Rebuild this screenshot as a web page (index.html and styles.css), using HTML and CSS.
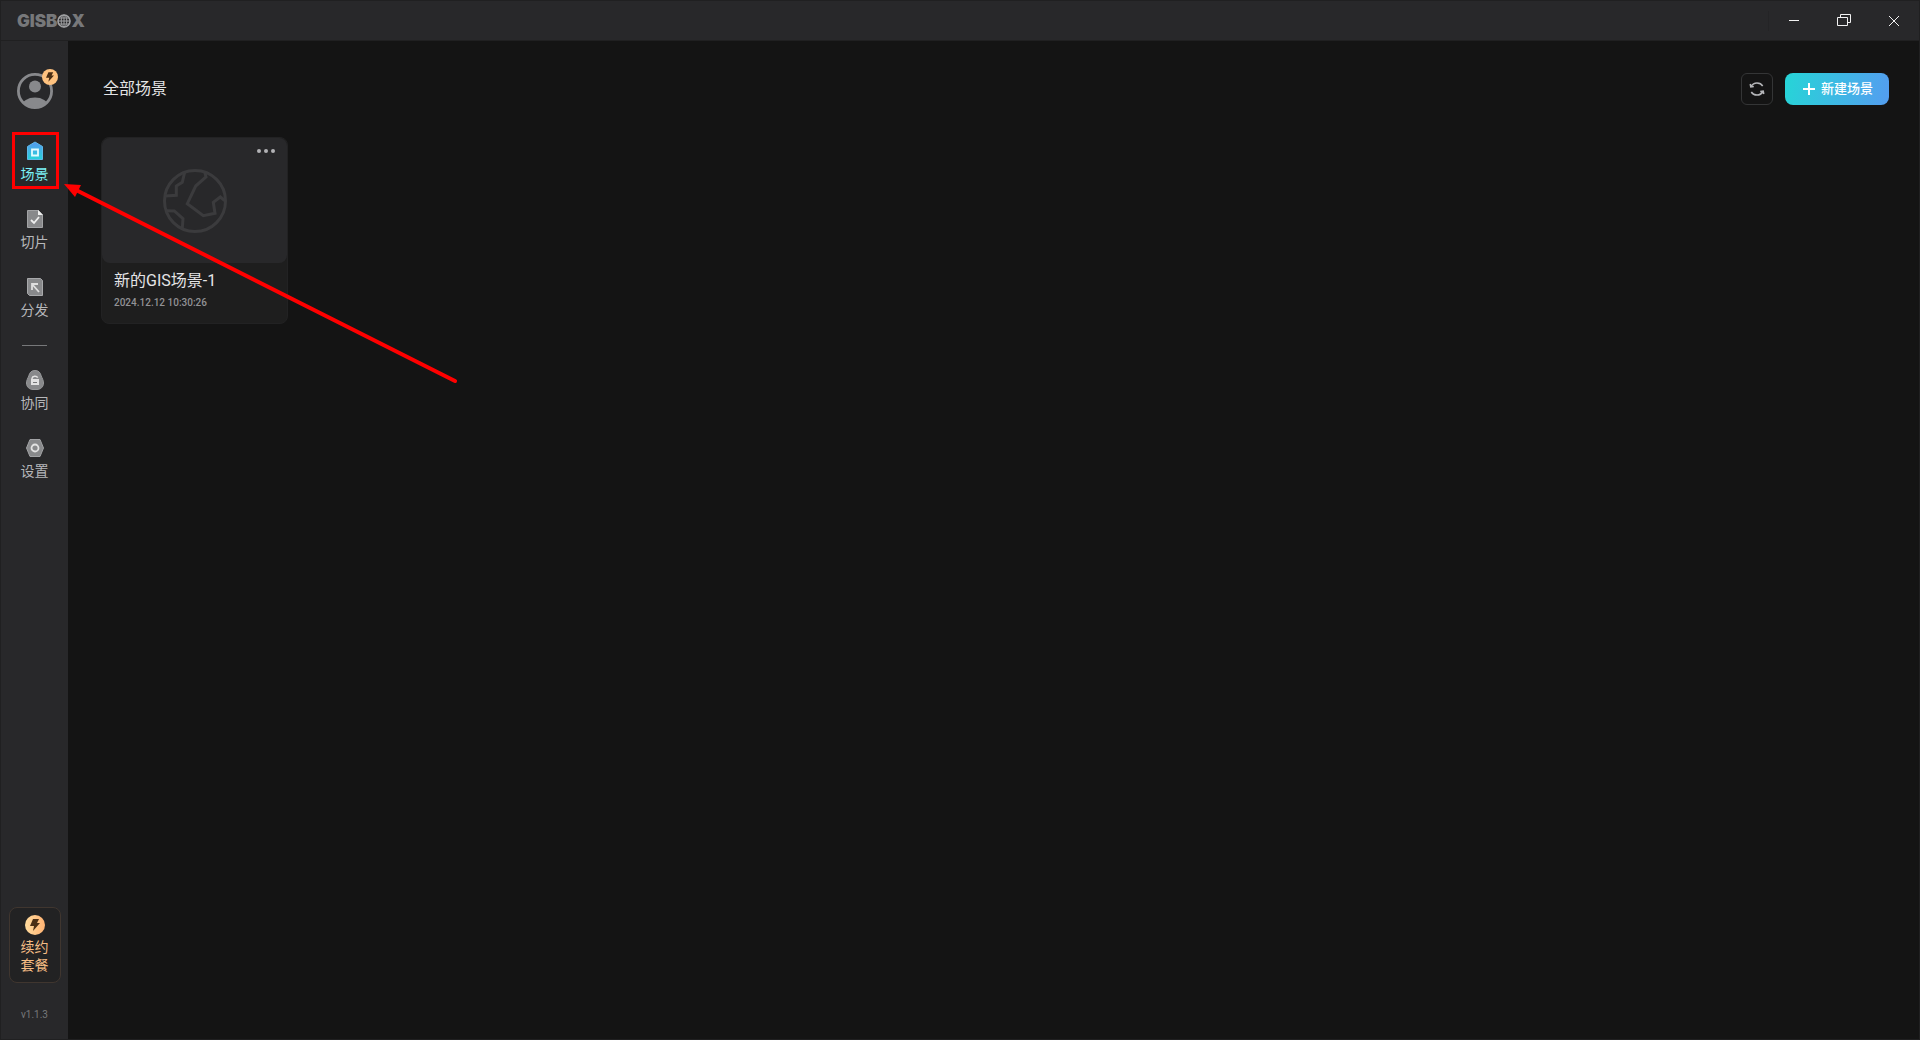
FILE: index.html
```html
<!DOCTYPE html>
<html lang="zh-CN">
<head>
    <meta charset="UTF-8">
    <meta name="viewport" content="width=device-width, initial-scale=1.0">
    <title>GISBOX</title>
    <link rel="stylesheet" href="styles.css">
</head>
<body>
    <header class="titlebar">
        <div class="logo">
            <span>GISB</span>
            <svg width="14" height="14" viewBox="0 0 14 14" fill="none" stroke="currentColor">
                <circle cx="7" cy="7" r="6" stroke-width="1.6"/>
                <ellipse cx="7" cy="7" rx="2.8" ry="6"/>
                <path d="M1 7h12M7 1v12M2 4h10M2 10h10"/>
            </svg>
            <span>X</span>
        </div>
        <div class="window-controls">
            <button type="button" aria-label="最小化">
                <svg width="16" height="16" viewBox="0 0 16 16"><path d="M3 7.500h10"/></svg>
            </button>
            <button type="button" aria-label="还原">
                <svg width="16" height="16" viewBox="0 0 16 16"><path d="M1.500 4.500h10v8h-10zM4.500 4.500v-3h10v8h-3"/></svg>
            </button>
            <button type="button" aria-label="关闭">
                <svg width="16" height="16" viewBox="0 0 16 16"><path d="M3 3l10 10M13 3L3 13"/></svg>
            </button>
        </div>
    </header>

    <div class="layout">
        <aside class="sidebar">
            <button type="button" class="avatar" aria-label="用户">
                <svg width="36" height="36" viewBox="0 0 36 36">
                    <clipPath id="avatar-clip"><circle cx="18" cy="18" r="17"/></clipPath>
                    <circle cx="18" cy="13.500" r="6" fill="#88898c"/>
                    <ellipse cx="18" cy="33" rx="13" ry="8.500" fill="#88898c" clip-path="url(#avatar-clip)"/>
                    <circle cx="18" cy="18" r="16.600" fill="none" stroke="#88898c" stroke-width="2.800"/>
                </svg>
                <svg class="avatar-badge" width="16" height="16" viewBox="0 0 20 20">
                    <circle cx="10" cy="10" r="10" fill="#ffc27f"/>
                    <path d="M8 4h6l-2 4h3l-7 8 1-5H5z" fill="#4a2e14"/>
                </svg>
            </button>

            <nav class="menu">
                <a href="#" class="menu-item active">
                    <svg width="20" height="20" viewBox="0 0 20 20">
                        <defs>
                            <linearGradient id="scene" x1="0" y1="0" x2="0" y2="1">
                                <stop offset="0" stop-color="#5797f0"/>
                                <stop offset="1" stop-color="#27d3d9"/>
                            </linearGradient>
                        </defs>
                        <path d="M10 1l7.500 4.500v13h-15v-13z" fill="url(#scene)" stroke="#5fb9e8"/>
                        <path d="M7 8.500h6v6H7z" fill="none" stroke="#e3fbff" stroke-width="1.800"/>
                    </svg>
                    <span>场景</span>
                </a>
                <a href="#" class="menu-item">
                    <svg width="20" height="20" viewBox="0 0 20 20">
                        <path d="M2.500 1.500h11l4 4.500v12.500h-15z" fill="#88898b" stroke="#a2a3a5"/>
                        <path d="M13 1l5 5h-5z" fill="#eee"/>
                        <path d="M6 11l3 3 5-6" fill="none" stroke="#eee" stroke-width="1.800"/>
                    </svg>
                    <span>切片</span>
                </a>
                <a href="#" class="menu-item">
                    <svg width="20" height="20" viewBox="0 0 20 20">
                        <path d="M2.500 1.500h13l2 2v15h-13l-2-2z" fill="#88898b" stroke="#a8a9ab"/>
                        <path d="M7 13V7h6M7 7l7 8" fill="none" stroke="#dfdfdf" stroke-width="1.800"/>
                    </svg>
                    <span>分发</span>
                </a>
                <hr class="menu-line">
                <a href="#" class="menu-item">
                    <svg width="20" height="20" viewBox="0 0 20 20">
                        <path d="M10 .5c3.500 0 5.500 2 6.200 5.500 1 2.200 2.300 4.500 2.300 7 0 4-3 6.500-6.500 6.500H8c-3.500 0-6.500-2.500-6.500-6.500 0-2.500 1.300-4.800 2.300-7C4.500 2.500 6.500.5 10 .5z" fill="#88898b" stroke="#98999b"/>
                        <path d="M7 9.500V8.300a3 2.300 0 0 1 5.700-.6" fill="none" stroke="#e2e2e2" stroke-width="1.500"/>
                        <path d="M6 9h8v6H6z" fill="#e2e2e2"/>
                        <path d="M8 12.500h4" stroke="#77787a"/>
                    </svg>
                    <span>协同</span>
                </a>
                <a href="#" class="menu-item">
                    <svg width="20" height="20" viewBox="0 0 20 20">
                        <path d="M5 1.500h10l3.500 8.500-3.500 8.500H5L1.500 10z" fill="#88898b" stroke="#a2a3a5"/>
                        <circle cx="10" cy="10" r="3.500" fill="none" stroke="#e2e2e2" stroke-width="1.800"/>
                    </svg>
                    <span>设置</span>
                </a>
            </nav>

            <button type="button" class="renew">
                <svg width="20" height="20" viewBox="0 0 20 20">
                    <defs>
                        <linearGradient id="gold">
                            <stop offset="0" stop-color="#ffdc9e"/>
                            <stop offset="1" stop-color="#ffb272"/>
                        </linearGradient>
                    </defs>
                    <circle cx="10" cy="10" r="10" fill="url(#gold)"/>
                    <path d="M8 4h6l-2 4h3l-7 8 1-5H5z" fill="#4a2e14"/>
                </svg>
                <span>续约<br>套餐</span>
            </button>
            <p class="version">v1.1.3</p>
        </aside>

        <main class="content">
            <div class="toolbar">
                <h1>全部场景</h1>
                <button type="button" class="btn-refresh" aria-label="刷新">
                    <svg width="16" height="16" viewBox="0 0 16 16" fill="none" stroke="#b5b6b9" stroke-width="1.500">
                        <path d="M2 5.500C3.500 3 5.500 2 8 2s4.500 1 5.700 3M14 10.500C12.500 13 10.500 14 8 14s-4.500-1-5.700-3M1.200 3l.6 3 3-.4M14.800 13l-.6-3-3 .4"/>
                    </svg>
                </button>
                <button type="button" class="btn-new">
                    <svg width="12" height="12" viewBox="0 0 12 12"><path d="M6 0v12M0 6h12" stroke="#fff" stroke-width="2"/></svg>
                    <span>新建场景</span>
                </button>
            </div>

            <div class="scene-list">
                <article class="card">
                    <div class="card-cover">
                        <svg width="64" height="64" viewBox="0 0 64 64" fill="none" stroke="#3b3b3d" stroke-width="3">
                            <circle cx="32" cy="32" r="30.500"/>
                            <path d="M21.600 3.500l-2.300 9.800-6 3.700v9.300L2 27"/>
                            <path d="M41.700 2.700L43 8l-10.300 9-8.400 17.700 16 12 11.700-2.400-1.700-11 7-5.300 4.700 3.700"/>
                            <path d="M3.300 41.700l8 .3 8.700 7.700-.7 9.600"/>
                        </svg>
                        <button type="button" class="card-more" aria-label="更多">
                            <svg width="18" height="4" viewBox="0 0 18 4" fill="#b2b2b5"><circle cx="2" cy="2" r="2"/><circle cx="9" cy="2" r="2"/><circle cx="16" cy="2" r="2"/></svg>
                        </button>
                    </div>
                    <div class="card-info">
                        <h2>新的GIS场景-1</h2>
                        <time datetime="2024-12-12T10:30:26">2024.12.12 10:30:26</time>
                    </div>
                </article>
            </div>
        </main>
    </div>

    <!-- 标注：红框和箭头 -->
    <svg class="annotation" width="480" height="400" viewBox="0 0 480 400">
        <path d="M13.500 133.500h44v54h-44z" fill="none" stroke="#f00" stroke-width="3"/>
        <path d="M76 190L455 381" stroke="#f00" stroke-width="4" stroke-linecap="round"/>
        <path d="M64 184l17 1-6 12z" fill="#f00"/>
    </svg>
</body>
</html>
```
FILE: styles.css
```css
* {
    box-sizing: border-box;
}
body {
    margin: 0;
    min-height: 100vh;
    display: flex;
    flex-direction: column;
    background-color: #141414;
    border: 1px solid #202021;
    color: #e4e4e6;
    font-family: Roboto, "Noto Sans CJK SC", sans-serif;
    font-size: 14px;
}
h1, h2, p {
    margin: 0;
    font-weight: normal;
}
button {
    padding: 0;
    border: none;
    background: none;
    color: inherit;
    font-family: inherit;
    cursor: pointer;
}
svg {
    display: block;
}
.titlebar {
    display: flex;
    justify-content: space-between;
    align-items: center;
    height: 40px;
    padding-left: 16px;
    background-color: #28282a;
    border-bottom: 1px solid #202021;
}
.logo {
    display: flex;
    align-items: center;
    color: #77787a;
    font-family: Inter, sans-serif;
    font-size: 17px;
    font-weight: 900;
    line-height: 20px;
}
.logo svg {
    color: #a0a1a3;
}
.window-controls {
    display: flex;
    border-left: 1px solid #242426;
}
.window-controls button {
    display: grid;
    place-items: center;
    width: 50px;
    height: 20px;
}
.window-controls path {
    fill: none;
    stroke: #f2f2f2;
}
.layout {
    flex: 1;
    display: flex;
}
.sidebar {
    display: flex;
    flex-direction: column;
    align-items: center;
    width: 67px;
    padding: 32px 0 16px;
    background-color: #28282a;
}
.avatar {
    position: relative;
}
.avatar-badge {
    position: absolute;
    top: -4px;
    right: -5px;
}
.menu {
    display: flex;
    flex-direction: column;
    align-items: center;
    gap: 24px;
    margin-top: 32px;
}
.menu-item {
    display: flex;
    flex-direction: column;
    align-items: center;
    gap: 2px;
    color: #b6b7ba;
    line-height: 22px;
    text-decoration: none;
}
.menu-item.active {
    color: #7cf3f8;
}
.menu-line {
    width: 25px;
    margin: 0;
    border: none;
    border-top: 1px solid #77787a;
}
.renew {
    display: flex;
    flex-direction: column;
    align-items: center;
    gap: 3px;
    width: 52px;
    margin-top: auto;
    padding: 7px 0 8px;
    border: 1px solid #40362f;
    border-radius: 8px;
    background-color: #222223;
    color: #f5bd85;
    font-size: 14px;
    line-height: 18px;
}
.version {
    margin-top: 24px;
    color: #77787a;
    font-size: 10px;
    line-height: 16px;
}
.content {
    flex: 1;
    padding: 32px 30px 32px 33px;
}
.toolbar {
    display: flex;
    align-items: center;
    gap: 12px;
}
.toolbar h1 {
    margin-right: auto;
    padding-left: 2px;
    font-size: 16px;
    line-height: 24px;
}
.btn-refresh {
    display: grid;
    place-items: center;
    width: 32px;
    height: 32px;
    border: 1px solid #343536;
    border-radius: 6px;
}
.btn-new {
    display: flex;
    align-items: center;
    gap: 6px;
    height: 32px;
    padding: 0 16px 0 18px;
    border-radius: 8px;
    background: linear-gradient(100deg, #26d5d7, #549df0);
    color: #fff;
    font-size: 13px;
    font-weight: 500;
    line-height: 18px;
}
.scene-list {
    display: grid;
    grid-template-columns: repeat(auto-fill, 187px);
    gap: 24px;
    margin-top: 32px;
}
.card {
    border: 1px solid #222223;
    border-radius: 8px;
    background-color: #1e1e1e;
}
.card-cover {
    position: relative;
    display: grid;
    place-items: center;
    height: 125px;
    border-radius: 8px;
    background-color: #28282a;
}
.card-more {
    position: absolute;
    top: 11px;
    right: 12px;
}
.card-info {
    padding: 6px 12px 10px;
}
.card-info h2 {
    font-size: 16px;
    line-height: 24px;
}
.card-info time {
    display: block;
    color: #929295;
    font-size: 10px;
    font-weight: 500;
    line-height: 20px;
}
.annotation {
    position: absolute;
    top: 0;
    left: 0;
    pointer-events: none;
}
```
